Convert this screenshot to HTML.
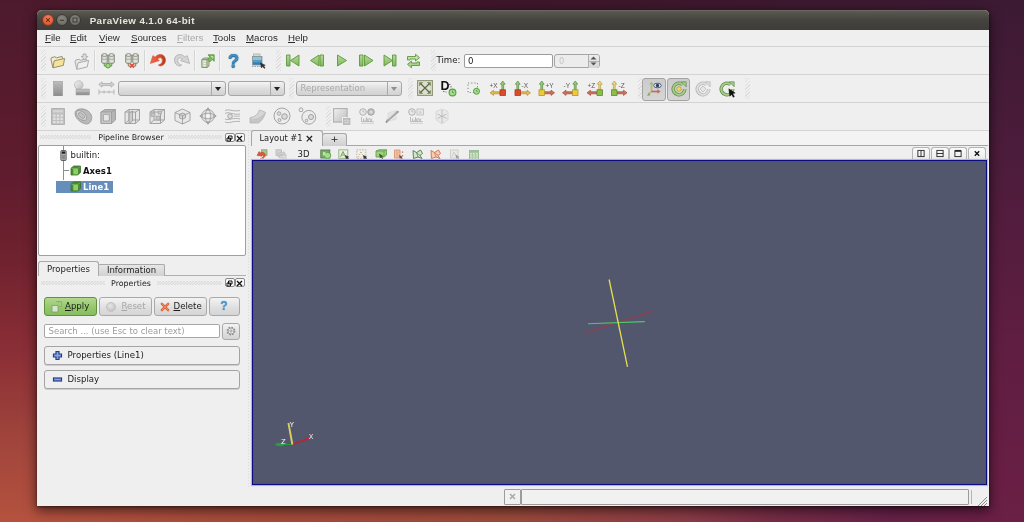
<!DOCTYPE html>
<html lang="en">
<head>
<meta charset="utf-8">
<title>ParaView 4.1.0 64-bit</title>
<style>
*{box-sizing:border-box;margin:0;padding:0}
html,body{width:1024px;height:522px;overflow:hidden}
body{position:relative;font-family:"DejaVu Sans","Liberation Sans",sans-serif;font-size:9px;color:#1a1a1a;
 background:#5a1d3c;}
.wl{position:absolute;left:0;top:0;width:38px;height:522px;background:linear-gradient(180deg,#4d1a2d 0%,#561b2d 17%,#5f1c2e 33%,#70222f 50%,#8a2e36 67%,#a0443c 84%,#b5523f 100%)}
.wr{position:absolute;left:987px;top:0;width:37px;height:522px;background:linear-gradient(180deg,#3c1a33 0%,#4e1c3c 33%,#601e42 67%,#6b1f45 100%)}
.wt{position:absolute;left:38px;top:0;width:949px;height:12px;background:linear-gradient(90deg,#4d1a2d 0%,#3e1629 50%,#3c1a33 100%)}
.wb2{position:absolute;left:38px;top:504px;width:949px;height:18px;background:linear-gradient(90deg,#b3513f 0%,#a54b3b 25%,#9c4a3c 50%,#8c3c46 68%,#782d46 77%,#672148 90%,#6b1f45 100%)}
.abs{position:absolute}
#win{will-change:transform;position:absolute;left:37px;top:10px;width:951.500px;height:497px;background:#efefef;border-radius:5px 5px 0 0;
 box-shadow:0 4px 12px 1px rgba(0,0,0,.55),0 1px 3px rgba(0,0,0,.45)}
#title{position:absolute;left:0;top:0;width:951.500px;height:20px;border-radius:5px 5px 0 0;
 background:linear-gradient(180deg,#5b5952 0%,#45443f 45%,#3d3c38 100%);border-top:1px solid #6b6962}
#title .t{position:absolute;left:52.700px;top:3px;font-family:"Liberation Sans","DejaVu Sans",sans-serif;font-weight:bold;font-size:9.800px;color:#e8e4dc;letter-spacing:.4px;white-space:nowrap;line-height:13px}
.wb{position:absolute;top:3.200px;width:12px;height:12px;border-radius:50%}
#menu{position:absolute;left:0;top:20px;width:951.500px;height:16px;background:#efefef;font-family:"Liberation Sans","DejaVu Sans",sans-serif;font-size:9.700px;color:#2a2a2a}
#menu span{position:absolute;top:2px;line-height:12px;white-space:nowrap}
#menu u{text-decoration:underline;text-underline-offset:1px}
.hl{position:absolute;left:0;width:951.500px;height:1px;background:#d3d3d3}
.ic{position:absolute;width:18px;height:18px}
.ic svg{display:block;width:18px;height:18px}
.vsep{position:absolute;width:1px;height:20px;background:#d4d4d4;box-shadow:1px 0 0 #f6f6f6}
.grip{position:absolute;width:4px;height:20px;background:repeating-linear-gradient(135deg,#d4d4d4 0 1px,rgba(0,0,0,0) 1px 2.5px);opacity:.65}
.combo{position:absolute;height:15px;border:1px solid #a5a5a5;border-radius:3px;background:linear-gradient(180deg,#f4f4f4 0%,#dedede 50%,#d2d2d2 100%)}
.combo .arr{position:absolute;right:0;top:0;width:14px;height:13px;border-left:1px solid #a8a8a8}
.combo .arr.dis:after{border-top-color:#8f8f8f}
.combo .arr:after{content:"";position:absolute;left:3px;top:5px;border:3.5px solid transparent;border-top:4px solid #222;border-bottom:0}
.docktitle{position:absolute;height:12px;font-size:7.900px;line-height:12px;text-align:center;color:#222}
.dots{position:absolute;height:4px;background:repeating-linear-gradient(135deg,#d0d0d0 0 .8px,rgba(0,0,0,0) .8px 2.120px);opacity:.55}
.db{position:absolute;width:10px;height:9px;border:1px solid #8a8a8a;border-radius:2px;background:#f8f8f8}
.btn{position:absolute;height:19px;border:1px solid #a9a9a9;border-radius:3px;background:linear-gradient(180deg,#f3f3f3 0%,#e0e0e0 55%,#d4d4d4 100%);font-size:8.600px;line-height:17px;color:#1c1c1c;white-space:nowrap}
.grp{position:absolute;left:7px;width:196px;height:19px;border:1px solid #a4a4a4;border-radius:3px;background:#efefef;box-shadow:0 1px 0 #cfcfcf;font-size:8.600px;line-height:17px}

#view{position:absolute;left:214.900px;top:150.400px;width:735.300px;height:325px;border:1.200px solid #0b0b82;background:#52576e;overflow:hidden;box-shadow:0 0 0 1.100px #b4b4dd,inset 0 0 0 1px #4a4aa0}
#view svg{position:relative;left:.3px;top:.7px;display:block}
.vb{position:absolute;top:137px;width:18px;height:12px;border:1px solid #b4b4b4;border-bottom:0;border-radius:3px 3px 0 0;background:linear-gradient(180deg,#fbfbfb,#ececec)}
.vb svg{display:block;width:16px;height:11px}
#win{height:496px}
</style>
</head>
<body>
<div class="wl"></div><div class="wr"></div><div class="wt"></div><div class="wb2"></div>
<div id="win">
 <div id="title">
  <div class="wb" style="left:5px;background:radial-gradient(circle at 50% 35%,#f08763 0%,#e05a36 70%,#b8442a 100%);border:1px solid #8c3a22"><svg width="10" height="10" viewBox="0 0 10 10" style="display:block"><path d="M3.200 3.200l3.600 3.600M6.800 3.200l-3.600 3.600" stroke="#7a2a14" stroke-width="1.200"/></svg></div>
  <div class="wb" style="left:19px;background:radial-gradient(circle at 50% 35%,#8a8880 0%,#6f6e68 70%,#5c5b56 100%);border:1px solid #3a3934"><svg width="10" height="10" viewBox="0 0 10 10" style="display:block"><path d="M3 5.300h4" stroke="#3f3e39" stroke-width="1.200"/></svg></div>
  <div class="wb" style="left:32px;background:radial-gradient(circle at 50% 35%,#8a8880 0%,#6f6e68 70%,#5c5b56 100%);border:1px solid #3a3934"><svg width="10" height="10" viewBox="0 0 10 10" style="display:block"><rect x="3" y="3" width="4" height="4" fill="none" stroke="#3f3e39" stroke-width="1"/></svg></div>
  <div class="t">ParaView 4.1.0 64-bit</div>
 </div>
 <div id="menu">
  <span style="left:8px"><u>F</u>ile</span>
  <span style="left:33px"><u>E</u>dit</span>
  <span style="left:62px"><u>V</u>iew</span>
  <span style="left:94px"><u>S</u>ources</span>
  <span style="left:140px;color:#a9a9a9"><u>F</u>ilters</span>
  <span style="left:176px"><u>T</u>ools</span>
  <span style="left:209px"><u>M</u>acros</span>
  <span style="left:251px"><u>H</u>elp</span>
 </div>
 <div class="hl" style="top:36px"></div>
 <div class="hl" style="top:64px"></div>
 <div class="hl" style="top:92px"></div>
 <div class="hl" style="top:120px"></div>
 <div class="grip" style="left:4px;top:40px;width:5px;height:21px;"></div>
 <div class="grip" style="left:239px;top:40px;width:5px;height:21px;"></div>
 <div class="grip" style="left:394px;top:40px;width:5px;height:21px;"></div>
 <div class="grip" style="left:4px;top:68px;width:5px;height:21px;"></div>
 <div class="grip" style="left:252px;top:68px;width:5px;height:21px;"></div>
 <div class="grip" style="left:371px;top:68px;width:5px;height:21px;"></div>
 <div class="grip" style="left:601px;top:68px;width:5px;height:21px;"></div>
 <div class="grip" style="left:708px;top:68px;width:5px;height:21px;"></div>
 <div class="grip" style="left:4px;top:96px;width:5px;height:21px;"></div>
 <div class="grip" style="left:289px;top:96px;width:5px;height:21px;"></div>
 <div class="vsep" style="left:57px;top:40px;width:1px;height:21px;"></div>
 <div class="vsep" style="left:107px;top:40px;width:1px;height:21px;"></div>
 <div class="vsep" style="left:157px;top:40px;width:1px;height:21px;"></div>
 <div class="vsep" style="left:182px;top:40px;width:1px;height:21px;"></div>
 <svg class="abs" style="left:13px;top:43px" width="16" height="16" viewBox="0 0 16 16"><g transform="rotate(-13 8 8)"><path d="M1.500 13.500V4.500l1-1.300h3.500l1 1.300H13V7" fill="#f3ecc8" stroke="#8f8c70" stroke-width=".9" stroke-linejoin="round"/><path d="M1.500 13.500L4.300 7H15l-2.800 6.500z" fill="#f6e29a" stroke="#8f8c70" stroke-width=".9" stroke-linejoin="round"/></g></svg>
 <svg class="abs" style="left:37px;top:43px" width="16" height="17" viewBox="0 0 16 17"><g transform="rotate(-13 8 10)"><path d="M1.500 15V7l1-1.300h3.500l1 1.300H13V9" fill="#e6e6e6" stroke="#a9a9a9" stroke-width=".9" stroke-linejoin="round"/><path d="M1.500 15L4.300 9H15l-2.800 6z" fill="#efefef" stroke="#a9a9a9" stroke-width=".9" stroke-linejoin="round"/></g><path d="M9 1h3v2.500h1.800L10.500 6.800 7.200 3.500H9z" fill="#dcdcdc" stroke="#a4a4a4" stroke-width=".8" stroke-linejoin="round"/></svg>
 <svg class="abs" style="left:62.5px;top:42px" width="16" height="17" viewBox="0 0 15.5 17"><path d="M1.500 3v7.500c0 1.100 5.500 1.100 5.500 0V3" fill="#dfe2da" stroke="#727c6b" stroke-width=".9"/><ellipse cx="4.250" cy="3" rx="2.750" ry="1.300" fill="#f4f5f0" stroke="#727c6b" stroke-width=".9"/><path d="M8.500 3v7.500c0 1.100 5.500 1.100 5.500 0V3" fill="#dfe2da" stroke="#727c6b" stroke-width=".9"/><ellipse cx="11.250" cy="3" rx="2.750" ry="1.300" fill="#f4f5f0" stroke="#727c6b" stroke-width=".9"/><path d="M1.500 6.500c0 1.100 5.500 1.100 5.500 0M8.500 6.500c0 1.100 5.500 1.100 5.500 0" fill="none" stroke="#8a9484" stroke-width=".7"/><path d="M4 11v3h3M11.500 11v3h-3" fill="none" stroke="#6c8a5c" stroke-width="1"/><circle cx="7.750" cy="13.700" r="2.300" fill="#9fdc7c" stroke="#4f9a38" stroke-width="1"/></svg>
 <svg class="abs" style="left:87px;top:42px" width="16" height="17" viewBox="0 0 15.5 17"><path d="M1.500 3v7.500c0 1.100 5.500 1.100 5.500 0V3" fill="#dfe2da" stroke="#727c6b" stroke-width=".9"/><ellipse cx="4.250" cy="3" rx="2.750" ry="1.300" fill="#f4f5f0" stroke="#727c6b" stroke-width=".9"/><path d="M8.500 3v7.500c0 1.100 5.500 1.100 5.500 0V3" fill="#dfe2da" stroke="#727c6b" stroke-width=".9"/><ellipse cx="11.250" cy="3" rx="2.750" ry="1.300" fill="#f4f5f0" stroke="#727c6b" stroke-width=".9"/><path d="M1.500 6.500c0 1.100 5.500 1.100 5.500 0M8.500 6.500c0 1.100 5.500 1.100 5.500 0" fill="none" stroke="#8a9484" stroke-width=".7"/><path d="M4 11v3h2M11.500 11v3h-2" fill="none" stroke="#8a6c5c" stroke-width="1"/><path d="M5.800 11.600l4 4M9.800 11.600l-4 4" stroke="#d9523a" stroke-width="1.700"/></svg>
 <svg class="abs" width="0" height="0"><defs><linearGradient id="gu" x1="0" y1="0" x2="1" y2="0"><stop offset="0" stop-color="#ea6e50"/><stop offset=".6" stop-color="#dc4c2e"/><stop offset="1" stop-color="#b0381f"/></linearGradient></defs></svg>
 <svg class="abs" style="left:113px;top:44px" width="16" height="12.5" viewBox="0 0 16 12.5"><path d="M0.3 9.5L2.9 1.6L5 3.2C7 1 9 .5 10.5 .5C13.5 .5 15.5 3 15.5 6.3C15.5 9.5 13 12 10.5 12C9.5 12 8.8 11.6 8.3 11C9 10.9 9.4 10.7 9.7 10.3C11.5 10 12.3 8.5 12.3 7C12.3 5 11.5 3.8 10.5 3.8C9.3 3.8 8.3 4.4 7.6 5.2L9.4 6.6Z" fill="url(#gu)" stroke="#c8472c" stroke-width=".5" stroke-linejoin="round"/><path d="M8 5.300c1-1 2-1.200 2.800-1 .8.400 1.200 1.400 1.200 2.500" fill="none" stroke="#f7c08a" stroke-width=".8" opacity=".8"/></svg>
 <svg class="abs" style="left:136.5px;top:44px" width="16" height="12.5" viewBox="0 0 16 12.5"><g transform="translate(16,0) scale(-1,1)"><path d="M0.3 9.5L2.9 1.6L5 3.2C7 1 9 .5 10.5 .5C13.5 .5 15.5 3 15.5 6.3C15.5 9.5 13 12 10.5 12C9.5 12 8.8 11.6 8.3 11C9 10.9 9.4 10.7 9.7 10.3C11.5 10 12.3 8.5 12.3 7C12.3 5 11.5 3.8 10.5 3.8C9.3 3.8 8.3 4.4 7.6 5.2L9.4 6.6Z" fill="#d4d4d4" stroke="#a6a6a6" stroke-width=".7" stroke-linejoin="round"/></g></svg>
 <svg class="abs" style="left:163.5px;top:44px" width="14" height="14" viewBox="0 0 14 14"><path d="M.8 5.500L3 4h5v8L6 13.500H.8z" fill="#c9d2bd" stroke="#7f8f6c" stroke-width=".9" stroke-linejoin="round"/><path d="M.8 5.500h5.200V13.500M6 5.500L8 4" fill="none" stroke="#7f8f6c" stroke-width=".8"/><path d="M2 7.500h3M2 9.500h3M2 11.500h3" stroke="#f0f3ea" stroke-width=".8"/><path d="M7 .8h6.200v6.500l-2-1.800L8.700 8 6.500 5.800 9 3.200z" fill="#7fb85c" stroke="#5a9440" stroke-width=".8" stroke-linejoin="round"/><path d="M10 2.500h1.800v1.800" fill="none" stroke="#d9efc9" stroke-width=".8"/></svg>
 <div class="abs" style="left:188px;top:40px;width:17px;height:21px;font-family:'Liberation Sans','DejaVu Sans',sans-serif;font-weight:bold;font-size:19px;line-height:21px;text-align:center;color:#3f8fc4;text-shadow:0 0 1px #1f5f8a,0 1px 1px #2a6a96">?</div>
 <svg class="abs" style="left:213px;top:42.5px" width="16" height="17" viewBox="0 0 16 17"><rect x="3.500" y="1" width="6.500" height="3" fill="#d4dccf" stroke="#a5ae9d" stroke-width=".7"/><rect x="2.500" y="3.500" width="9.500" height="8.500" fill="#2f7fb4" stroke="#8d96a0" stroke-width=".8"/><rect x="3" y="4" width="8.500" height="3.500" fill="#8ec3d9"/><rect x="3" y="7.500" width="8.500" height="2" fill="#4f9bc4"/><path d="M2 13.500h9" stroke="#9aa3ad" stroke-width="1" stroke-dasharray="1.500 1"/><path d="M10.500 10l1 5 1.200-1.600 1.600 2 .8-.7-1.600-1.900 1.800-.6z" fill="#333" stroke="#111" stroke-width=".4"/></svg>
 <svg class="abs" width="0" height="0"><defs><linearGradient id="gg" x1="0" y1="0" x2="0" y2="1"><stop offset="0" stop-color="#b4dc94"/><stop offset="1" stop-color="#7fb85c"/></linearGradient><linearGradient id="gr" x1="0" y1="0" x2="0" y2="1"><stop offset="0" stop-color="#bdbdbd"/><stop offset="1" stop-color="#8a8a8a"/></linearGradient><linearGradient id="gl" x1="0" y1="0" x2="1" y2="1"><stop offset="0" stop-color="#f1f1f1"/><stop offset="1" stop-color="#bcbcbc"/></linearGradient></defs></svg>
 <svg class="abs" style="left:247.5px;top:44px" width="16" height="13" viewBox="0 0 16 13"><rect x="1.500" y="1" width="3.500" height="11" fill="url(#gg)" stroke="#5f9640" stroke-width=".9" stroke-linejoin="round"/><path d="M14 1v11L5.500 6.500z" fill="url(#gg)" stroke="#5f9640" stroke-width=".9" stroke-linejoin="round"/></svg>
 <svg class="abs" style="left:271.5px;top:44px" width="16" height="13" viewBox="0 0 16 13"><path d="M10 1v11L1.500 6.500z" fill="url(#gg)" stroke="#5f9640" stroke-width=".9" stroke-linejoin="round"/><rect x="11" y="1" width="3.500" height="11" fill="url(#gg)" stroke="#5f9640" stroke-width=".9" stroke-linejoin="round"/></svg>
 <svg class="abs" style="left:298.5px;top:44px" width="12" height="13" viewBox="0 0 12 13"><path d="M1.500 1v11L10.500 6.500z" fill="url(#gg)" stroke="#5f9640" stroke-width=".9" stroke-linejoin="round"/></svg>
 <svg class="abs" style="left:320.5px;top:44px" width="16" height="13" viewBox="0 0 16 13"><rect x="1.500" y="1" width="3.500" height="11" fill="url(#gg)" stroke="#5f9640" stroke-width=".9" stroke-linejoin="round"/><path d="M6.500 1v11L15 6.500z" fill="url(#gg)" stroke="#5f9640" stroke-width=".9" stroke-linejoin="round"/></svg>
 <svg class="abs" style="left:344.5px;top:44px" width="16" height="13" viewBox="0 0 16 13"><path d="M2 1v11L10.500 6.500z" fill="url(#gg)" stroke="#5f9640" stroke-width=".9" stroke-linejoin="round"/><rect x="10.500" y="1" width="3.500" height="11" fill="url(#gg)" stroke="#5f9640" stroke-width=".9" stroke-linejoin="round"/></svg>
 <svg class="abs" style="left:369px;top:42.5px" width="15" height="16" viewBox="0 0 15 16"><path d="M1.500 7V3.500h8V1.200L13.500 4.700 9.500 8V6H4v1z" fill="#bfe3a4" stroke="#5f9640" stroke-width=".9" stroke-linejoin="round"/><path d="M13.500 9v3.500h-8v2.300L1.500 11.300 5.500 8v2H11V9z" fill="#a6d688" stroke="#5f9640" stroke-width=".9" stroke-linejoin="round"/></svg>
 <div class="abs" style="left:399.5px;top:44px;font-size:8.600px;line-height:13px;color:#1c1c1c">Time:</div>
 <div class="abs" style="left:426.5px;top:43.5px;width:89.7px;height:14.5px;border:1px solid #9c9c9c;border-radius:2px;background:#fff;font-size:8.600px;line-height:12.500px;padding-left:3.500px;color:#222">0</div>
 <div class="abs" style="left:516.9px;top:44px;width:46.1px;height:14px;border:1px solid #a5a5a5;border-radius:3px;background:#ececec;font-size:8.300px;line-height:12px;padding-left:4px;color:#c4c4c4">0</div>
 <div class="abs" style="left:550.5px;top:44.5px;width:11.5px;height:13px;border-left:1px solid #b0b0b0;border-radius:0 3px 3px 0;background:linear-gradient(180deg,#ededed,#d6d6d6)"></div>
 <div class="abs" style="left:551px;top:50.7px;width:11px;height:1px;background:#b0b0b0"></div>
 <svg class="abs" style="left:553px;top:45.7px" width="7" height="4" viewBox="0 0 7 4"><path d="M.5 3.500L3.500.5l3 3z" fill="#555"/></svg>
 <svg class="abs" style="left:553px;top:52.3px" width="7" height="4" viewBox="0 0 7 4"><path d="M.5.5L3.500 3.500l3-3z" fill="#555"/></svg>
 <svg class="abs" style="left:15.5px;top:70.55px" width="10" height="15.5" viewBox="0 0 10 15.5"><rect x=".5" y=".5" width="9" height="14.500" fill="url(#gr)" stroke="#9a9a9a" stroke-width=".6"/><path d="M1 4h8M1 7.500h8M1 11h8" stroke="#a8a8a8" stroke-width=".5" opacity=".6"/></svg>
 <svg class="abs" style="left:36.7px;top:70.2px" width="16" height="16" viewBox="0 0 16 16"><circle cx="4.800" cy="5" r="4.300" fill="url(#gl)" stroke="#b5b5b5" stroke-width=".7"/><rect x="2" y="9" width="13.500" height="6" fill="url(#gr)" stroke="#a0a0a0" stroke-width=".5"/><path d="M2 11h13.500" stroke="#d0d0d0" stroke-width=".7"/></svg>
 <svg class="abs" style="left:60.5px;top:71.3px" width="17" height="14" viewBox="0 0 17 14"><path d="M.8 3.500L4 .8v1.700h9V.8l3.200 2.700L13 6.200V4.500H4v1.700z" fill="#d0d0d0" stroke="#a8a8a8" stroke-width=".7" stroke-linejoin="round"/><path d="M1 11h15M1 8.500v5M16 8.500v5M6 9.500v3M11 9.500v3" stroke="#b0b0b0" stroke-width=".9"/></svg>
 <div class="combo" style="left:81px;top:71.2px;width:107.5px;height:14.5px;"><div class="arr"></div></div>
 <div class="combo" style="left:191px;top:71.2px;width:57px;height:14.5px;"><div class="arr"></div></div>
 <div class="combo" style="left:258.5px;top:71.2px;width:106.5px;height:14.5px;font-size:8.500px;line-height:12.500px;padding-left:4px;color:#aaa">Representation<div class="arr dis"></div></div>
 <svg class="abs" style="left:380px;top:70.3px" width="16" height="16" viewBox="0 0 16 16"><rect x=".6" y=".6" width="14.800" height="14.800" fill="#deded0" stroke="#8f9474" stroke-width="1.100"/><path d="M3.500 3.500l9 9M12.500 3.500l-9 9" stroke="#56663e" stroke-width="1.100"/><path d="M2.500 2.500h3.200l-3.200 3.200zM13.500 2.500v3.200l-3.200-3.200zM2.500 13.500v-3.200l3.200 3.200zM13.500 13.500h-3.200l3.200-3.200z" fill="#6a8a4c" stroke="#56763c" stroke-width=".4"/></svg>
 <div class="abs" style="left:403.5px;top:68.8px;font-family:'Liberation Sans','DejaVu Sans',sans-serif;font-weight:bold;font-size:12.500px;line-height:14px;color:#111">D</div>
 <svg class="abs" style="left:411px;top:77.7px" width="9" height="9" viewBox="0 0 9 9"><circle cx="4.500" cy="4.500" r="3.400" fill="#a6dc8c" stroke="#4fa03c" stroke-width="1.100"/><path d="M4.500 2.800v1.900h1.500" stroke="#3f8a30" stroke-width=".7" fill="none"/></svg>
 <svg class="abs" style="left:404px;top:72.5px" width="12" height="10" viewBox="0 0 12 10"><path d="M8 1.500h1.500M10 3v1.500M2 8.500h1.500M4.500 9h1" stroke="#666" stroke-width=".9"/></svg>
 <svg class="abs" style="left:430px;top:72px" width="13" height="13" viewBox="0 0 13 13"><rect x="1" y="1" width="9.500" height="9.500" fill="none" stroke="#6f7a6a" stroke-width=".9" stroke-dasharray="1.200 2"/><circle cx="9.500" cy="9.300" r="3" fill="#a6dc8c" stroke="#4fa03c" stroke-width="1"/><path d="M9.500 7.800v1.600h1.300" stroke="#3f8a30" stroke-width=".6" fill="none"/></svg>
 <svg class="abs" style="left:452px;top:70.3px" width="18" height="16" viewBox="0 0 18 16"><path d="M12.85 10V4.200h-1.500L13.75 1l2.400 3.200h-1.500V10z" fill="#9ccc78" stroke="#4f8a38" stroke-width=".7" stroke-linejoin="round"/><path d="M11 11.800h-6.500v-1.600L1 12.800l3.500 2.600v-1.600h6.500z" fill="#e0bc5c" stroke="#b58a30" stroke-width=".7" stroke-linejoin="round"/><rect x="11" y="9.800" width="5.500" height="5.700" fill="#dc4a2c" stroke="#b03a22" stroke-width=".8"/><text x="0.5" y="8" font-family="'Liberation Sans','DejaVu Sans',sans-serif" font-size="6.500" fill="#5a5a5a">+X</text></svg>
 <svg class="abs" style="left:476px;top:70.3px" width="18" height="16" viewBox="0 0 18 16"><path d="M3.85 10V4.200h-1.500L4.75 1l2.400 3.200h-1.500V10z" fill="#9ccc78" stroke="#4f8a38" stroke-width=".7" stroke-linejoin="round"/><path d="M7.5 11.800h6.500v-1.600L17.5 12.800l-3.500 2.600v-1.600h-6.500z" fill="#e0bc5c" stroke="#b58a30" stroke-width=".7" stroke-linejoin="round"/><rect x="2" y="9.800" width="5.500" height="5.700" fill="#dc4a2c" stroke="#b03a22" stroke-width=".8"/><text x="8.5" y="8" font-family="'Liberation Sans','DejaVu Sans',sans-serif" font-size="6.500" fill="#5a5a5a">-X</text></svg>
 <svg class="abs" style="left:501px;top:70.3px" width="18" height="16" viewBox="0 0 18 16"><path d="M2.85 10V4.200h-1.500L3.75 1l2.400 3.200h-1.500V10z" fill="#9ccc78" stroke="#4f8a38" stroke-width=".7" stroke-linejoin="round"/><path d="M6.5 11.800h6.500v-1.600L16.5 12.800l-3.500 2.600v-1.600h-6.500z" fill="#cc7460" stroke="#a04a38" stroke-width=".7" stroke-linejoin="round"/><rect x="1" y="9.800" width="5.500" height="5.700" fill="#ecca3c" stroke="#b5962c" stroke-width=".8"/><text x="7.5" y="8" font-family="'Liberation Sans','DejaVu Sans',sans-serif" font-size="6.500" fill="#5a5a5a">+Y</text></svg>
 <svg class="abs" style="left:524px;top:70.3px" width="18" height="16" viewBox="0 0 18 16"><path d="M13.35 10V4.200h-1.500L14.25 1l2.400 3.200h-1.500V10z" fill="#9ccc78" stroke="#4f8a38" stroke-width=".7" stroke-linejoin="round"/><path d="M11.5 11.800h-6.500v-1.600L1.5 12.800l3.500 2.600v-1.600h6.500z" fill="#cc7460" stroke="#a04a38" stroke-width=".7" stroke-linejoin="round"/><rect x="11.5" y="9.800" width="5.500" height="5.700" fill="#ecca3c" stroke="#b5962c" stroke-width=".8"/><text x="2.5" y="8" font-family="'Liberation Sans','DejaVu Sans',sans-serif" font-size="6.500" fill="#5a5a5a">-Y</text></svg>
 <svg class="abs" style="left:549px;top:70.3px" width="18" height="16" viewBox="0 0 18 16"><path d="M12.85 10V4.200h-1.500L13.75 1l2.400 3.200h-1.500V10z" fill="#ecd98a" stroke="#b59a38" stroke-width=".7" stroke-linejoin="round"/><path d="M11 11.800h-6.500v-1.600L1 12.800l3.500 2.600v-1.600h6.500z" fill="#cc7460" stroke="#a04a38" stroke-width=".7" stroke-linejoin="round"/><rect x="11" y="9.800" width="5.500" height="5.700" fill="#8cbc4c" stroke="#5f8a34" stroke-width=".8"/><text x="1.5" y="8" font-family="'Liberation Sans','DejaVu Sans',sans-serif" font-size="6.500" fill="#5a5a5a">+Z</text></svg>
 <svg class="abs" style="left:573px;top:70.3px" width="18" height="16" viewBox="0 0 18 16"><path d="M3.35 10V4.200h-1.500L4.25 1l2.400 3.200h-1.500V10z" fill="#ecd98a" stroke="#b59a38" stroke-width=".7" stroke-linejoin="round"/><path d="M7 11.800h6.500v-1.600L17 12.800l-3.500 2.600v-1.600h-6.500z" fill="#cc7460" stroke="#a04a38" stroke-width=".7" stroke-linejoin="round"/><rect x="1.5" y="9.800" width="5.500" height="5.700" fill="#8cbc4c" stroke="#5f8a34" stroke-width=".8"/><text x="8.5" y="8" font-family="'Liberation Sans','DejaVu Sans',sans-serif" font-size="6.500" fill="#5a5a5a">-Z</text></svg>
 <div class="abs" style="left:605px;top:67.5px;width:23.5px;height:23px;border:1px solid #a3a3a3;border-radius:3px;background:linear-gradient(180deg,#cbcbcb,#d6d6d6)"></div>
 <div class="abs" style="left:629.5px;top:67.5px;width:23.5px;height:23px;border:1px solid #a3a3a3;border-radius:3px;background:linear-gradient(180deg,#cbcbcb,#d6d6d6)"></div>
 <svg class="abs" style="left:609px;top:70.5px" width="16" height="16" viewBox="0 0 16 16"><path d="M5.500 2v8.500l-3.500 3" fill="none" stroke="#b8b86a" stroke-width="1.600"/><path d="M5.500 10.500H12" stroke="#c46a5a" stroke-width="1.600"/><path d="M11.500 8.300l3 2.200-3 2.200z" fill="#c46a5a"/><path d="M3.300 3.500L5.500.8l2.200 2.700z" fill="#a8b86a"/><path d="M2.800 11.800L1 15l3.500-.8z" fill="#8aa85a"/><ellipse cx="11.500" cy="4.500" rx="3.800" ry="2.300" fill="#e8eef6" stroke="#2a3a5a" stroke-width=".8"/><circle cx="11.500" cy="4.500" r="1.700" fill="#2a3f6a"/></svg>
 <svg class="abs" style="left:633.5px;top:70.5px" width="16" height="16" viewBox="0 0 16 16"><path d="M13.800 8a5.800 5.800 0 1 1-2.300-4.600" fill="none" stroke="#5f8a48" stroke-width="3.400"/><path d="M13.800 8a5.800 5.800 0 1 1-2.300-4.600" fill="none" stroke="#a9cc8c" stroke-width="2"/><path d="M10.200.8h5v5z" fill="#a9cc8c" stroke="#5f8a48" stroke-width=".7" stroke-linejoin="round"/><circle cx="8" cy="8" r="2.300" fill="#ecdc5c" stroke="#a89a38" stroke-width=".7"/></svg>
 <svg class="abs" style="left:657.5px;top:70.5px" width="16" height="16" viewBox="0 0 16 16"><path d="M13.800 8a5.800 5.800 0 1 1-2.300-4.600" fill="none" stroke="#b5b5b5" stroke-width="3.400"/><path d="M13.800 8a5.800 5.800 0 1 1-2.300-4.600" fill="none" stroke="#dedede" stroke-width="2"/><path d="M10.200.8h5v5z" fill="#dedede" stroke="#b5b5b5" stroke-width=".7" stroke-linejoin="round"/><path d="M8 5l3 3-3 3-3-3z" fill="#e6e6e6" stroke="#bdbdbd" stroke-width=".8"/></svg>
 <svg class="abs" style="left:681.5px;top:70.5px" width="16" height="16" viewBox="0 0 16 16"><path d="M13.800 8a5.800 5.800 0 1 1-2.300-4.600" fill="none" stroke="#5f8a48" stroke-width="3.400"/><path d="M13.800 8a5.800 5.800 0 1 1-2.300-4.600" fill="none" stroke="#a9cc8c" stroke-width="2"/><path d="M10.200.8h5v5z" fill="#a9cc8c" stroke="#5f8a48" stroke-width=".7" stroke-linejoin="round"/></svg>
 <svg class="abs" style="left:690.5px;top:77.5px" width="8" height="10" viewBox="0 0 8 10"><path d="M.8.800l1 7.500 1.700-2 1.700 3 1.200-.7-1.700-3 2.500-.5z" fill="#111" stroke="#000" stroke-width=".4"/></svg>
 <svg class="abs" style="left:13.7px;top:97.5px" width="14" height="17" viewBox="0 0 14 17"><rect x=".6" y=".6" width="12.800" height="15.800" fill="#bfbfbf" stroke="#a9a9a9" stroke-width=".8"/><rect x="2" y="2" width="10" height="2.500" fill="#d4d4d4"/><path d="M2.200 6.500h2.400v2.200H2.200zM5.800 6.500h2.400v2.200H5.800zM9.400 6.500h2.400v2.200H9.400zM2.200 9.800h2.400V12H2.200zM5.800 9.800h2.400V12H5.800zM9.400 9.800h2.400V12H9.400zM2.200 13.100h2.400v2.200H2.200zM5.800 13.100h2.400v2.200H5.800zM9.400 13.100h2.400v2.200H9.400z" fill="#e2e2e2"/></svg>
 <svg class="abs" style="left:36.5px;top:97.3px" width="19" height="18" viewBox="0 0 19 18"><path d="M1.300 4.500C4 0.300 14 .8 17.300 8c1.500 4.500-1 9-5 9C7 16.500-.5 10.500 1.300 4.500z" fill="#b9b9b9" stroke="#9c9c9c" stroke-width=".9" stroke-linejoin="round"/><ellipse cx="7.500" cy="8.500" rx="6.300" ry="3.600" transform="rotate(42 7.500 8.500)" fill="#d6d6d6" stroke="#9c9c9c" stroke-width=".9" stroke-linejoin="round"/><ellipse cx="7.500" cy="8.500" rx="3.800" ry="1.900" transform="rotate(42 7.500 8.500)" fill="#c4c4c4" stroke="#9c9c9c" stroke-width=".9" stroke-linejoin="round"/></svg>
 <svg class="abs" style="left:62.5px;top:97.5px" width="17" height="17" viewBox="0 0 17 17"><path d="M1 4L5 1.500h10.500V12L11.500 15.500H1z" fill="#b4b4b4" stroke="#9c9c9c" stroke-width=".9" stroke-linejoin="round"/><path d="M1 4h10.500V15.500H1z" fill="#c9c9c9" stroke="#9c9c9c" stroke-width=".9" stroke-linejoin="round"/><path d="M3.300 6.300h6V13h-6z" fill="#e6e6e6" stroke="#9c9c9c" stroke-width=".9" stroke-linejoin="round"/><path d="M11.500 4L15.500 1.500" fill="none" stroke="#9c9c9c" stroke-width=".9" stroke-linejoin="round"/></svg>
 <svg class="abs" style="left:87px;top:97.5px" width="17" height="17" viewBox="0 0 17 17"><path d="M1 4L5 1.500h10.500V12L11.500 15.500H1z" fill="#e6e6e6" stroke="#9c9c9c" stroke-width=".9" stroke-linejoin="round"/><path d="M1 4h10.500V15.500M11.500 4L15.500 1.500M5 1.500V12H15.500M5 12L1 15.500" fill="none" stroke="#9c9c9c" stroke-width=".9" stroke-linejoin="round"/><path d="M5 5.500L8.500 3v10L5 15.500z" fill="#cdcdcd" stroke="#9c9c9c" stroke-width=".9" stroke-linejoin="round"/></svg>
 <svg class="abs" style="left:112px;top:97.5px" width="17" height="17" viewBox="0 0 17 17"><path d="M1 4L5 1.500h10.500V12L11.500 15.500H1z" fill="#e6e6e6" stroke="#9c9c9c" stroke-width=".9" stroke-linejoin="round"/><path d="M1 4h10.500V15.500M11.500 4L15.500 1.500M5 1.500V12H15.500M5 12L1 15.500" fill="none" stroke="#9c9c9c" stroke-width=".9" stroke-linejoin="round"/><path d="M2 5h4v3.500H2zM7 8h4v4H7zM9 3h3.500v3H9z" fill="#c4c4c4" stroke="#9f9f9f" stroke-width=".6"/></svg>
 <svg class="abs" style="left:137px;top:97.5px" width="17" height="17" viewBox="0 0 17 17"><path d="M1 4.500L8.500 1 16 4.500v8L8.500 16 1 12.500z" fill="#e9e9e9" stroke="#9c9c9c" stroke-width=".9" stroke-linejoin="round"/><path d="M1 4.500L8.500 8 16 4.500M8.500 8v8" fill="none" stroke="#9c9c9c" stroke-width=".9" stroke-linejoin="round"/><path d="M5.500 6.300L8.500 5l3 1.300v3.500l-3 1.400-3-1.400z" fill="#d6d6d6" stroke="#9c9c9c" stroke-width=".9" stroke-linejoin="round"/><path d="M5.500 6.300l3 1.400 3-1.400M8.500 7.700v3.500" fill="none" stroke="#9c9c9c" stroke-width=".9" stroke-linejoin="round"/></svg>
 <svg class="abs" style="left:161.5px;top:96.8px" width="18" height="18" viewBox="0 0 18 18"><circle cx="9" cy="9" r="6.300" fill="#e9e9e9" stroke="#9c9c9c" stroke-width=".9" stroke-linejoin="round"/><ellipse cx="9" cy="9" rx="6.300" ry="2.800" fill="none" stroke="#9c9c9c" stroke-width=".9" stroke-linejoin="round"/><ellipse cx="9" cy="9" rx="2.800" ry="6.300" fill="none" stroke="#9c9c9c" stroke-width=".9" stroke-linejoin="round"/><circle cx="9" cy="9" r="2.300" fill="#f6f6f6" stroke="#c4c4c4" stroke-width=".5"/><path d="M9 .8l1.500 2h-3zM9 17.200l1.500-2h-3zM.8 9l2-1.500v3zM17.200 9l-2-1.500v3z" fill="#c9c9c9" stroke="#9c9c9c" stroke-width=".9" stroke-linejoin="round"/></svg>
 <svg class="abs" style="left:186.5px;top:98px" width="17" height="16" viewBox="0 0 17 16"><path d="M1 2.500c4-2 7 1.500 15 0M1 5.500c4-2.500 8 2 15 .5M1 11c4 2 8-2 15 0M1 14c4 2 8-1.500 15-.5" fill="none" stroke="#a9a9a9" stroke-width=".9"/><circle cx="6" cy="8.200" r="2.300" fill="#e2e2e2" stroke="#9c9c9c" stroke-width=".9" stroke-linejoin="round"/><path d="M9.500 8.200h6.500" stroke="#b4b4b4" stroke-width=".9"/></svg>
 <svg class="abs" style="left:211.5px;top:98.5px" width="18" height="15" viewBox="0 0 18 15"><path d="M1 14V8.500C6 8.500 9 5 10.500 1l6 2.500C15.500 8 13 11.500 9.500 14z" fill="#c6c6c6" stroke="#b0b0b0" stroke-width=".7"/><path d="M1 8.500C6 8.500 9 5 10.500 1l6 2.500C14 7 9 10.500 4.500 10.500" fill="#d6d6d6" stroke="#b9b9b9" stroke-width=".6"/></svg>
 <svg class="abs" style="left:236.2px;top:97px" width="18" height="18" viewBox="0 0 18 18"><circle cx="9" cy="9" r="8" fill="#ececec" stroke="#9c9c9c" stroke-width=".9" stroke-linejoin="round"/><circle cx="11.500" cy="9.500" r="2.800" fill="#d9d9d9" stroke="#9f9f9f" stroke-width="1"/><circle cx="6" cy="6.500" r="1.700" fill="#e2e2e2" stroke="#9c9c9c" stroke-width=".9" stroke-linejoin="round"/><circle cx="6.500" cy="13" r="1.500" fill="#e2e2e2" stroke="#9c9c9c" stroke-width=".9" stroke-linejoin="round"/></svg>
 <svg class="abs" style="left:260.5px;top:97px" width="19" height="18" viewBox="0 0 19 18"><circle cx="10.800" cy="10.300" r="6.900" fill="#ececec" stroke="#9c9c9c" stroke-width=".9" stroke-linejoin="round"/><circle cx="3" cy="2.800" r="1.900" fill="#efefef" stroke="#9c9c9c" stroke-width=".9" stroke-linejoin="round"/><circle cx="13" cy="10" r="2.500" fill="#dcdcdc" stroke="#9f9f9f" stroke-width="1"/><circle cx="8.500" cy="13.500" r="1.300" fill="#e2e2e2" stroke="#9c9c9c" stroke-width=".9" stroke-linejoin="round"/><path d="M4.500 4.500L6 6" stroke="#b4b4b4" stroke-width=".7"/></svg>
 <svg class="abs" style="left:296px;top:97.5px" width="18" height="17" viewBox="0 0 18 17"><rect x=".6" y=".6" width="13.500" height="13.500" fill="url(#gl)" stroke="#b0b0b0" stroke-width="1.100"/><rect x="9" y="9" width="5.500" height="5.500" fill="#efefef"/><rect x="10.500" y="10.500" width="6.500" height="6" fill="#bdbdbd" stroke="#a6a6a6" stroke-width=".6"/><path d="M10.500 12.500h6.500M10.500 14.500h6.500M12.700 10.500v6M14.900 10.500v6" stroke="#d9d9d9" stroke-width=".6"/></svg>
 <svg class="abs" style="left:321.5px;top:98px" width="17" height="16" viewBox="0 0 17 16"><circle cx="4" cy="4" r="3.300" fill="#eaeaea" stroke="#a9a9a9" stroke-width=".9"/><path d="M4 2v2h1.500" fill="none" stroke="#a9a9a9" stroke-width=".7"/><circle cx="12" cy="4" r="3.300" fill="#bdbdbd" stroke="#a3a3a3" stroke-width=".9"/><circle cx="12" cy="4" r="1.500" fill="#dedede"/><path d="M2.500 9v4.500h12M4.500 13v-2.500M6 13v-1.500M7.500 13V9.500l1.500 3.500 1.500-3 1.500 3 1-2.500" fill="none" stroke="#b0b0b0" stroke-width=".8"/><path d="M2 15.300h13" stroke="#c4c4c4" stroke-width=".7"/></svg>
 <svg class="abs" style="left:347px;top:98px" width="17" height="16" viewBox="0 0 17 16"><path d="M2 12.500L13 3l2 .8-11 9.500z" fill="#d2d2d2" stroke="#a9a9a9" stroke-width=".8"/><path d="M4 5l8-2.500v9L4 13z" fill="#e2e2e2" stroke="#c9c9c9" stroke-width=".5" opacity=".8"/><path d="M2.500 14L14 3.500" stroke="#9a9a9a" stroke-width="1.100"/><path d="M5 9.500l1.500 1.500M7 7.800l1.500 1.500M9 6l1.500 1.500M11 4.300l1.300 1.300" stroke="#b4b4b4" stroke-width=".7"/><circle cx="2.500" cy="14" r=".9" fill="#8f8f8f"/></svg>
 <svg class="abs" style="left:371px;top:98px" width="17" height="16" viewBox="0 0 17 16"><circle cx="4" cy="4" r="3.300" fill="#eaeaea" stroke="#a9a9a9" stroke-width=".9"/><path d="M4 2v2h1.500" fill="none" stroke="#a9a9a9" stroke-width=".7"/><rect x="9" y="1" width="6.500" height="6" fill="#e6e6e6" stroke="#bdbdbd" stroke-width=".8"/><path d="M10.500 5.500l1.700-3 1.700 3z" fill="#cfcfcf"/><path d="M2.500 9v4.500h12M4.500 13v-2.500M6 13v-1.500M7.500 13V9.500l1.500 3.500 1.500-3 1.500 3 1-2.500" fill="none" stroke="#b0b0b0" stroke-width=".8"/><path d="M2 15.300h13" stroke="#c4c4c4" stroke-width=".7"/></svg>
 <svg class="abs" style="left:396.5px;top:97.5px" width="16" height="17" viewBox="0 0 16 17"><path d="M2 3.500L8 1l6 2.500v8L8 16 2 11.500z" fill="#e9e9e9" stroke="#d2d2d2" stroke-width=".8"/><path d="M8 2v13M3.500 6l9 4.500M12.500 6l-9 4.500" stroke="#b9b9b9" stroke-width=".9"/></svg>
 <svg class="abs" style="left:219px;top:139px" width="12" height="11" viewBox="0 0 12 11"><rect x="5.500" y=".8" width="5.500" height="5.500" fill="#a9c48c" stroke="#7f9a64" stroke-width=".7"/><path d="M1 6.500L3 2.500l1.300 1.200c2-1 4.800-.2 5 2.300.1 2-1.600 3.300-3.500 2.800 1.300-.4 2-1.200 1.700-2.200-.3-1-1.400-1.300-2.200-.8L6.200 7.200z" fill="#e0583c" stroke="#b8402a" stroke-width=".5" stroke-linejoin="round"/><path d="M4 9.500c1 .8 2.500.8 3.500 0" fill="none" stroke="#e07a5c" stroke-width="1"/></svg>
 <svg class="abs" style="left:238px;top:138.7px" width="12" height="11" viewBox="0 0 12 11"><rect x="1" y=".8" width="5.500" height="5.500" fill="#d2d2d2" stroke="#b4b4b4" stroke-width=".7"/><path d="M11 6.500L9 2.500 7.700 3.700c-2-1-4.800-.2-5 2.300-.1 2 1.600 3.300 3.500 2.800-1.300-.4-2-1.200-1.700-2.200.3-1 1.400-1.300 2.200-.8L5.800 7.200z" fill="#cfcfcf" stroke="#b0b0b0" stroke-width=".5" stroke-linejoin="round"/><rect x="7" y="6" width="4" height="4.500" fill="#dcdcdc" stroke="#bdbdbd" stroke-width=".6"/></svg>
 <svg class="abs" style="left:282.5px;top:139px" width="12" height="11" viewBox="0 0 12 11"><rect x=".8" y="1" width="9" height="8" fill="#7fa86c" stroke="#4f7a44" stroke-width=".9"/><circle cx="7.500" cy="6.500" r="3.200" fill="#a6dc8c" stroke="#4fa03c" stroke-width=".9"/><path d="M3 3h2.500v3.500H3z" fill="#c4dcb4"/></svg>
 <svg class="abs" style="left:300.5px;top:138.7px" width="12" height="11" viewBox="0 0 12 11"><rect x=".8" y=".8" width="9" height="8.500" fill="#e9efe2" stroke="#8fb47a" stroke-width=".9"/><path d="M2.500 8L5 2.500 7.500 8M3.500 6h3" fill="none" stroke="#7fa064" stroke-width="1"/><path d="M7 6l1 4.500 1-1.300 1.200 1.500.8-.6L9.800 8.600l1.500-.5z" fill="#333"/></svg>
 <svg class="abs" style="left:319px;top:138.7px" width="12" height="11" viewBox="0 0 12 11"><rect x=".8" y=".8" width="9" height="8.500" fill="#f1efe9" stroke="#a8a88a" stroke-width=".8" stroke-dasharray="1.500 1.200"/><path d="M2.500 8L5 2.500 7.500 8" fill="none" stroke="#c4a88a" stroke-width=".8" stroke-dasharray="1.200 1"/><path d="M7 6l1 4.500 1-1.300 1.200 1.500.8-.6L9.800 8.600l1.500-.5z" fill="#333"/></svg>
 <svg class="abs" style="left:337.5px;top:138.7px" width="13" height="11" viewBox="0 0 13 11"><path d="M1 2L4 .8h7.500V6L9 8H1z" fill="#9fd07f" stroke="#5f9a48" stroke-width=".8" stroke-linejoin="round"/><path d="M1 2h8v6M9 2l2.500-1.200" fill="none" stroke="#5f9a48" stroke-width=".7"/><path d="M4 4.500l1 5 1-1.300 1.200 1.700.9-.6L7 7.700l1.500-.5z" fill="#3a5a2a"/></svg>
 <svg class="abs" style="left:356px;top:138.7px" width="12" height="11" viewBox="0 0 12 11"><path d="M1.500 1h5.500v8H1.500z" fill="#f1c4a6" stroke="#d98a64" stroke-width=".8"/><path d="M3 3h2.500M3 5h2.500M3 7h2.500" stroke="#e0a080" stroke-width=".8"/><path d="M9.500 2.500v1.200M9.500 6v1.200" stroke="#c4704a" stroke-width="1.300"/><path d="M6 6l1 4 .9-1.100 1 1.300.7-.5-1-1.300 1.300-.4z" fill="#6a4a3a"/></svg>
 <svg class="abs" style="left:375px;top:138.7px" width="12" height="11" viewBox="0 0 12 11"><path d="M1 1.500l3.500 2L8.500 1l2 3.500-2.500 2 2 3-4-1.500L1.500 9.500z" fill="#d6e6cc" stroke="#4f7a4a" stroke-width=".9" stroke-linejoin="round"/><path d="M4.500 3.500L6 8M8 6.500l-3.500-3" fill="none" stroke="#4f7a4a" stroke-width=".7"/></svg>
 <svg class="abs" style="left:393px;top:138.7px" width="12" height="11" viewBox="0 0 12 11"><path d="M1 1.500l3.500 2L8.500 1l2 3.500-2.500 2 2 3-4-1.500L1.500 9.500z" fill="#f4cdb4" stroke="#d0704a" stroke-width=".9" stroke-linejoin="round"/><path d="M4.500 3.500L6 8M8 6.500l-3.500-3" fill="none" stroke="#d0704a" stroke-width=".7"/></svg>
 <svg class="abs" style="left:412px;top:138.7px" width="12" height="11" viewBox="0 0 12 11"><rect x="1.500" y="1" width="7.500" height="8" fill="#e9e9e6" stroke="#c9c9c4" stroke-width=".8"/><path d="M3 7.500L5 3l2 4.500" fill="none" stroke="#c4c9bd" stroke-width=".8"/><path d="M6.500 5.500l1 4.500.9-1.200 1 1.400.7-.5-1-1.400 1.400-.4z" fill="#9a9a9a"/></svg>
 <svg class="abs" style="left:431.5px;top:139.7px" width="10" height="10" viewBox="0 0 10 10"><rect x=".5" y=".5" width="9" height="9" fill="#cfe6c4" stroke="#8fb08a" stroke-width=".8"/><rect x=".5" y=".5" width="9" height="2.300" fill="#9fc09a"/><path d="M3.500 2.800v6.700M6.500 2.800v6.700M.5 5h9M.5 7.300h9" stroke="#a4c49f" stroke-width=".7"/></svg>


 <!-- pipeline browser dock -->
 <div class="dots" style="left:3px;top:124.500px;width:51px"></div>
 <div class="dots" style="left:131px;top:124.500px;width:54px"></div>
 <div class="docktitle" style="left:1px;top:121.500px;width:186px">Pipeline Browser</div>
 <div class="db" style="left:187.500px;top:122.500px"><svg width="7" height="7" viewBox="0 0 7 7"><path d="M2.5 1h3.5v3h-3.5zM1 3h3.5v3h-3.5z" fill="#f8f8f8" stroke="#111" stroke-width="1"/></svg></div>
 <div class="db" style="left:198px;top:122.500px"><svg width="7" height="7" viewBox="0 0 7 7"><path d="M1 1l5 5M6 1l-5 5" stroke="#111" stroke-width="1.3" fill="none"/></svg></div>
 <div class="abs" style="left:1px;top:135px;width:208px;height:111px;background:#fff;border:1px solid #9f9f9f;border-radius:2px"></div>
 <div class="abs" style="left:26px;top:136px;width:1px;height:34px;background:#8e8e8e"></div>
 <div class="abs" style="left:26px;top:160px;width:6px;height:1px;background:#8e8e8e"></div>
 <div class="abs" style="left:19px;top:170.700px;width:57px;height:12px;background:#668ebd"></div>
 <svg class="abs" style="left:22.500px;top:140px" width="7" height="11" viewBox="0 0 7 11"><rect x=".8" y=".5" width="5.400" height="10" rx=".8" fill="#b9b9b9" stroke="#4a4a4a" stroke-width=".8"/><rect x="1.800" y="1.500" width="3.400" height="2.200" fill="#1e1e1e"/><rect x="1.800" y="4.800" width="3.400" height="4.700" fill="#8c8c8c"/></svg>
 <div class="abs" style="left:33.5px;top:139px;font-size:8.5px;line-height:12px;color:#222">builtin:</div>
 <svg class="abs cube" style="left:32.500px;top:155px" width="11.500" height="10.500" viewBox="0 0 11.500 10.500"><path d="M1 3.200L3.800 1H10.500v6.300L7.800 10H1z" fill="#4d8a38" stroke="#3a6e2a" stroke-width=".8" stroke-linejoin="round"/><path d="M3.300 3.800h4.700v5.600H3.300z" fill="#8fd063"/><path d="M1.500 3.500h6.500l2-2" fill="none" stroke="#7fb85c" stroke-width=".7"/></svg>
 <div class="abs" style="left:46px;top:154.5px;font-size:8.5px;line-height:12px;font-weight:bold;color:#111">Axes1</div>
 <svg class="abs cube" style="left:32.500px;top:171.300px" width="11.500" height="10.500" viewBox="0 0 11.500 10.500"><path d="M1 3.200L3.800 1H10.500v6.300L7.800 10H1z" fill="#4d8a38" stroke="#3a6e2a" stroke-width=".8" stroke-linejoin="round"/><path d="M3.300 3.800h4.700v5.600H3.300z" fill="#8fd063"/><path d="M1.500 3.500h6.500l2-2" fill="none" stroke="#7fb85c" stroke-width=".7"/></svg>
 <div class="abs" style="left:46px;top:170.700px;font-size:8.5px;line-height:12px;font-weight:bold;color:#fff">Line1</div>
 <!-- splitter dots -->
 <div class="abs" style="left:210px;top:121px;width:3px;height:356px;background-image:radial-gradient(circle,#dadada .6px,rgba(0,0,0,0) .9px);background-size:3px 3px"></div>
 <!-- tabs -->
 <div class="abs" style="left:1px;top:265px;width:208px;height:1px;background:#b0b0b0"></div>
 <div class="abs" style="left:61px;top:254px;width:67px;height:12px;border:1px solid #a9a9a9;border-bottom:0;border-radius:2px 2px 0 0;background:linear-gradient(180deg,#e6e6e6,#d1d1d1);font-size:8.5px;line-height:11px;text-align:center;color:#222">Information</div>
 <div class="abs" style="left:1px;top:251px;width:61px;height:15px;border:1px solid #a9a9a9;border-bottom:0;border-radius:3px 3px 0 0;background:#efefef;font-size:8.5px;line-height:15px;text-align:center;color:#222">Properties</div>
 <!-- properties dock -->
 <div class="dots" style="left:3.500px;top:270.500px;width:64px"></div>
 <div class="dots" style="left:120px;top:270.500px;width:65px"></div>
 <div class="docktitle" style="left:1px;top:268px;width:186px">Properties</div>
 <div class="db" style="left:187.500px;top:268.300px"><svg width="7" height="7" viewBox="0 0 7 7"><path d="M2.5 1h3.5v3h-3.5zM1 3h3.5v3h-3.5z" fill="#f8f8f8" stroke="#111" stroke-width="1"/></svg></div>
 <div class="db" style="left:198px;top:268.300px"><svg width="7" height="7" viewBox="0 0 7 7"><path d="M1 1l5 5M6 1l-5 5" stroke="#111" stroke-width="1.3" fill="none"/></svg></div>
 <div class="btn" style="left:7px;top:287px;width:53px;background:linear-gradient(180deg,#b2d88c 0%,#97c96f 50%,#86bd5e 100%);border-color:#5f9140;padding-left:20px"><u>A</u>pply</div>
 <svg class="abs" style="left:13px;top:290px" width="13" height="13" viewBox="0 0 13 13"><path d="M2 5.5h6V12H2z" fill="#d8e6cf" stroke="#7f9d6c" stroke-width=".8"/><path d="M6 1.5h5.5v5H9" fill="none" stroke="#8fae7c" stroke-width="1"/><path d="M8 3l2-1.8 2 1.8" fill="none" stroke="#8fae7c" stroke-width="1"/></svg>
 <div class="btn" style="left:61.500px;top:287px;width:53px;color:#a6a6a6;padding-left:22px"><u>R</u>eset</div>
 <div class="abs" style="left:69px;top:292px;width:10px;height:10px;border-radius:50%;background:radial-gradient(circle at 40% 35%,#e6e6e6,#b9b9b9);border:1px solid #c2c2c2"></div>
 <div class="btn" style="left:116.500px;top:287px;width:53px;padding-left:19px"><u>D</u>elete</div>
 <svg class="abs" style="left:122.500px;top:292px" width="10" height="10" viewBox="0 0 11 11"><path d="M2 2l7 7M9 2l-7 7" stroke="#e0623a" stroke-width="2.6" stroke-linecap="round"/><path d="M2 2l7 7M9 2l-7 7" stroke="#ee8a62" stroke-width="1.1" stroke-linecap="round"/></svg>
 <div class="btn" style="left:171.500px;top:287px;width:31px;text-align:center;font-weight:bold;font-size:12px;color:#4a9fd8;font-family:'Liberation Sans','DejaVu Sans',sans-serif;text-shadow:0 0 1px #2f77b0">?</div>
 <div class="abs" style="left:7px;top:314px;width:176px;height:14px;border:1px solid #a6a6a6;border-radius:2px;background:#fff;font-size:8.5px;line-height:12px;color:#9d9d9d;padding-left:3.500px;white-space:nowrap">Search ... (use Esc to clear text)</div>
 <div class="btn" style="left:184.500px;top:312.500px;width:18px;height:17px"></div>
 <svg class="abs" style="left:187.500px;top:315px" width="12" height="12" viewBox="0 0 12 12"><circle cx="6" cy="6" r="3.6" fill="none" stroke="#8a8a8a" stroke-width="1.6" stroke-dasharray="1.5 1.33"/><circle cx="6" cy="6" r="3" fill="#f2f2f2" stroke="#8a8a8a" stroke-width=".8"/><circle cx="6" cy="6" r="1.2" fill="#e2e2e2" stroke="#8a8a8a" stroke-width=".7"/></svg>
 <div class="grp" style="top:336px;padding-left:22.500px">Properties (Line1)</div>
 <svg class="abs" style="left:14.500px;top:340px" width="11" height="11" viewBox="0 0 11 11"><path d="M4 1.500h3v2.500h2.500v3H7v2.500H4V7H1.500V4H4z" fill="#8aa0d6" stroke="#1f3f8f" stroke-width="1.200"/></svg>
 <div class="grp" style="top:360px;padding-left:22.500px">Display</div>
 <svg class="abs" style="left:14.500px;top:364px" width="11" height="11" viewBox="0 0 11 11"><rect x="1.500" y="4" width="8" height="3" fill="#8aa0d6" stroke="#1f3f8f" stroke-width="1.200"/></svg>


 <!-- layout tabs -->
 <div class="abs" style="left:214px;top:121px;width:737px;height:14px;background:#f3f3f3"></div><div class="abs" style="left:214px;top:134.800px;width:737px;height:1.200px;background:#a6a6a6"></div>
 <div class="abs" style="left:285px;top:123px;width:25px;height:13px;border:1px solid #a6a6a6;border-bottom:0;border-radius:3px 3px 0 0;background:linear-gradient(180deg,#e9e9e9,#cfcfcf);font-size:9.500px;line-height:9px;text-align:center;color:#222">+</div>
 <div class="abs" style="left:214px;top:120px;width:72px;height:16px;border:1px solid #a6a6a6;border-bottom:0;border-radius:3px 3px 0 0;background:#efefef;font-size:8.300px;line-height:13px;color:#222;white-space:nowrap;padding-left:7.500px">Layout #1<span style="font-size:10.500px;font-weight:bold;position:relative;top:.5px;left:2.500px">&#215;</span></div>
 <!-- view toolbar -->
 <div id="vtb"></div>
 <div class="abs" style="left:260.500px;top:137.800px;font-size:8.500px;line-height:12px;color:#222">3D</div>
 <!-- view frame buttons -->
 <div class="vb" style="left:874.700px"><svg viewBox="0 0 18 12"><rect x="5.5" y="2.5" width="7" height="7" fill="none" stroke="#222" stroke-width="1"/><line x1="9" y1="2.5" x2="9" y2="9.5" stroke="#222" stroke-width="1"/></svg></div>
 <div class="vb" style="left:893.500px"><svg viewBox="0 0 18 12"><rect x="5.5" y="2.5" width="7" height="7" fill="none" stroke="#222" stroke-width="1"/><line x1="5.5" y1="6" x2="12.5" y2="6" stroke="#222" stroke-width="1"/></svg></div>
 <div class="vb" style="left:912px"><svg viewBox="0 0 18 12"><rect x="5.5" y="3" width="7" height="6.5" fill="none" stroke="#222" stroke-width="1"/><line x1="5.5" y1="3" x2="12.5" y2="3" stroke="#222" stroke-width="2"/></svg></div>
 <div class="vb" style="left:930.600px"><svg viewBox="0 0 18 12"><path d="M6.5 3.5l5 5M11.5 3.5l-5 5" stroke="#111" stroke-width="1.5" fill="none"/></svg></div>
 <!-- viewport -->
 <div id="view">
  <svg width="732" height="322" viewBox="0 0 732 322">
   <line x1="332" y1="171" x2="400" y2="149" stroke="#9c3a4c" stroke-width="1.200"/>
   <line x1="335" y1="161.700" x2="391.700" y2="159.600" stroke="#4fc868" stroke-width="1.100"/>
   <line x1="356.100" y1="117.500" x2="374.500" y2="204.900" stroke="#e4e04a" stroke-width="1.300"/>
   <!-- orientation axes -->
   <path d="M39.400 282.500L22.500 282.300" stroke="#2a9a40" stroke-width="1.200"/>
   <ellipse cx="27" cy="282.500" rx="4.500" ry="1.700" fill="#25a03f"/>
   <path d="M39.400 282.500L54 277" stroke="#b82438" stroke-width="1.500"/>
   <path d="M52.500 275.300l5.200.300-3.600 3.700z" fill="#c4243a"/>
   <path d="M39.400 282.500L35.400 261" stroke="#d9cc62" stroke-width="1.900"/>
   <text x="36.700" y="265.300" font-family="'DejaVu Sans','Liberation Sans',sans-serif" font-size="6.800" fill="#f1efe0">Y</text>
   <text x="55.800" y="277" font-family="'DejaVu Sans','Liberation Sans',sans-serif" font-size="6.800" fill="#f1e4e4">X</text>
   <text x="28" y="282.300" font-family="'DejaVu Sans','Liberation Sans',sans-serif" font-size="6.800" fill="#f4f8f4">Z</text>
  </svg>
 </div>
 <!-- status -->
 <div class="abs" style="left:467px;top:479px;width:17px;height:16px;border:1px solid #9c9c9c;background:#f1f1f1;border-radius:1px"><svg width="15" height="13" viewBox="0 0 15 13"><path d="M5 4l5 5M10 4l-5 5" stroke="#a9a9a9" stroke-width="1.6" fill="none"/></svg></div>
 <div class="abs" style="left:484px;top:479px;width:447.500px;height:16px;border:1px solid #9c9c9c;background:#f1f1f1;border-radius:1px"></div>
 <div class="abs" style="left:934px;top:480px;width:1px;height:14px;background:#b5b5b5"></div>
 <svg class="abs" style="left:938px;top:484px" width="12" height="12" viewBox="0 0 12 12"><path d="M3 12L12 3M6 12l6-6M9 12l3-3" stroke="#8d8d8d" stroke-width="1" fill="none"/></svg>

</div>
</body>
</html>
